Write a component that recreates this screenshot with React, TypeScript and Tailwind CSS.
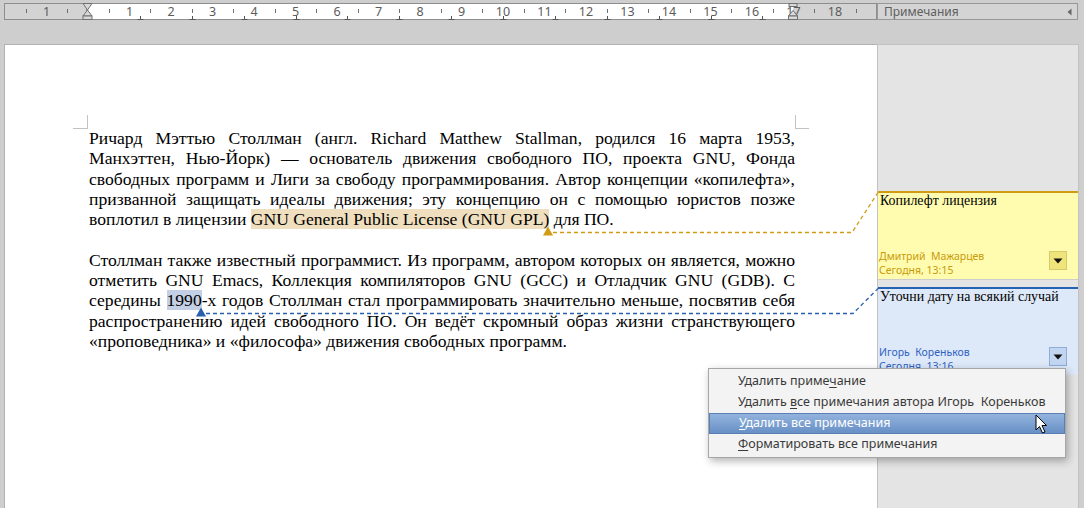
import React from 'react';

const CM = 41.5;
const ZERO = 88;

const Ruler = () => {
  const nums = Array.from({ length: 18 }, (_, i) => i + 1);
  const ticks = Array.from({ length: 21 }, (_, i) => ZERO + CM * (i - 2 + 0.5)).filter((x) => x > 6 && x < 875);
  const tabs = Array.from({ length: 13 }, (_, i) => ZERO + 51.875 * (i + 1));
  return (
    <svg width="877" height="20" className="block shrink-0">
      <rect x="4.5" y="3.5" width="872" height="16" fill="#d3d3d3" stroke="#8e8e8e" />
      <rect x="86" y="4" width="707" height="15" fill="#ffffff" />
      <line x1="86.5" y1="4" x2="86.5" y2="19" stroke="#9a9a9a" />
      {ticks.map((x) => (
        <line key={x} x1={Math.round(x) + 0.5} y1="9" x2={Math.round(x) + 0.5} y2="13" stroke="#6e6e6e" />
      ))}
      {tabs.map((x) => (
        <g key={x} stroke="#555" fill="none">
          <line x1={Math.round(x) + 0.5} y1="16" x2={Math.round(x) + 0.5} y2="19.5" />
          <line x1={Math.round(x) - 2.5} y1="19.5" x2={Math.round(x) + 3.5} y2="19.5" />
        </g>
      ))}
      <text x="46.5" y="16" fontSize="12.5" fill="#5c5c5c" textAnchor="middle" fontFamily="Noto Sans, sans-serif">1</text>
      {nums.map((n) => (
        <text key={n} x={ZERO + CM * n} y="16" fontSize="12.5" fill="#5c5c5c" textAnchor="middle" fontFamily="Noto Sans, sans-serif">
          {n}
        </text>
      ))}
      {/* left indent marker */}
      <g fill="#d9d9d9" stroke="#707070" strokeWidth="1">
        <path d="M83 3.5 L92 3.5 L87.5 10 Z" />
        <path d="M87.5 10 L92 16 L83 16 Z" />
        <rect x="83" y="16" width="9" height="3.5" />
      </g>
      {/* right indent marker */}
      <g fill="#d9d9d9" stroke="#707070" strokeWidth="1">
        <rect x="789" y="3.5" width="8" height="3" />
        <path d="M793 10.5 L797.5 16 L788.5 16 Z" />
        <rect x="788.5" y="16" width="9" height="3.5" />
      </g>
    </svg>
  );
};

const Highlight = ({ color, children }: { color: string; children: React.ReactNode }) => (
  <span style={{ backgroundColor: color }}>{children}</span>
);

const Line = ({ children, last }: { children: React.ReactNode; last?: boolean }) => (
  <span className={last ? 'block text-left whitespace-nowrap' : 'block whitespace-nowrap text-justify [text-align-last:justify]'}>{children}</span>
);

const DropButton = ({ tone }: { tone: 'yellow' | 'blue' }) => (
  <div
    className={
      tone === 'yellow'
        ? 'mt-[2px] mr-[11px] w-[18px] h-[19px] bg-[#efe47c] border border-[#d6cb6a] flex items-center justify-center'
        : 'mt-[2px] mr-[11px] w-[18px] h-[19px] bg-[#c3d6f1] border border-[#8eadd9] flex items-center justify-center'
    }
  >
    <svg width="10" height="6" viewBox="0 0 10 6">
      <path d="M0.5 0.5 L9.5 0.5 L5 5.5 Z" fill="#111" />
    </svg>
  </div>
);

const Comment = ({
  tone,
  text,
  author,
  date,
}: {
  tone: 'yellow' | 'blue';
  text: string;
  author: string;
  date: string;
}) => (
  <div
    className={
      tone === 'yellow'
        ? 'h-[88px] bg-[#fffcb0] border-t-2 border-[#cf9b12] flex flex-col justify-between'
        : 'h-[88px] bg-[#dde9f9] border-t-2 border-[#2562b3] flex flex-col justify-between'
    }
  >
    <div className="pl-[2px] text-[13.9px] leading-[15px] text-black font-['Liberation_Serif',serif]">{text}</div>
    <div className="flex justify-between items-start pb-[2px]">
      <div
        className={
          tone === 'yellow'
            ? "pl-[1px] text-[10.5px] leading-[14px] text-[#c99a08] font-['Noto_Sans',sans-serif] whitespace-pre"
            : "pl-[1px] text-[10.5px] leading-[14px] text-[#2f62c0] font-['Noto_Sans',sans-serif] whitespace-pre"
        }
      >
        <div>{author}</div>
        <div>{date}</div>
      </div>
      <DropButton tone={tone} />
    </div>
  </div>
);

const menuItems = [
  { pre: 'Удалить приме', key: 'ч', post: 'ание', active: false },
  { pre: 'Удалить ', key: 'в', post: 'се примечания автора Игорь  Кореньков', active: false },
  { pre: '', key: 'У', post: 'далить все примечания', active: true },
  { pre: '', key: 'Ф', post: 'орматировать все примечания', active: false },
];

const ContextMenu = () => (
  <div className="absolute left-[708px] top-[368px] w-[358px] bg-[#f3f3f3] border border-[#a6a6a6] shadow-[2px_3px_8px_rgba(0,0,0,0.3)] py-[2px] font-['Noto_Sans',sans-serif] text-[12.5px]">
    {menuItems.map((it) => (
      <div
        key={it.post}
        className={
          it.active
            ? 'h-[21px] pl-[29px] flex items-center whitespace-pre text-white bg-gradient-to-b from-[#93b3dd] to-[#6890c6] border border-[#5a7fb6]'
            : 'h-[21px] pl-[29px] flex items-center whitespace-pre text-[#3a3a3a]'
        }
      >
        <span>
          {it.pre}
          <span className="underline underline-offset-2">{it.key}</span>
          {it.post}
        </span>
      </div>
    ))}
  </div>
);

const Connectors = () => (
  <svg width="1084" height="508" className="absolute left-0 top-0 pointer-events-none">
    <path d="M553 232.5 L852 232.5 L878 192.5" fill="none" stroke="#d19c14" strokeWidth="1.3" strokeDasharray="4 3" />
    <path d="M543 235.5 L553 235.5 L548 226.5 Z" fill="#d19c14" />
    <path d="M206 313.5 L853 313.5 L878 288.5" fill="none" stroke="#2a5fae" strokeWidth="1.3" strokeDasharray="4 3" />
    <path d="M196 316.5 L206 316.5 L201 307.5 Z" fill="#2a5fae" />
  </svg>
);

const Cursor = () => (
  <svg width="14" height="21" viewBox="0 0 14 21" className="absolute left-[1035px] top-[414px] pointer-events-none">
    <path d="M1 1 L1 16 L4.5 12.5 L7.5 19 L10 18 L7 11.5 L11.5 11.5 Z" fill="#ffffff" stroke="#000" strokeWidth="1" strokeLinejoin="round" />
  </svg>
);

export default function App() {
  return (
    <div className="relative w-[1084px] h-[508px] overflow-hidden bg-[#cecece]">
      <div className="flex h-[20px]">
        <Ruler />
        <div className="mt-[3px] h-[17px] w-[201px] border border-[#989898] bg-[#d4d4d4] flex items-center justify-between pl-[6px] pr-[5px]">
          <span className="text-[12px] leading-none text-[#5e5e5e] font-['Noto_Sans',sans-serif]">Примечания</span>
          <svg width="5" height="8" viewBox="0 0 5 8">
            <path d="M4.5 0.5 L4.5 7.5 L0.5 4 Z" fill="#666" />
          </svg>
        </div>
      </div>

      <div className="flex mt-[24px] h-[464px]">
        <div className="ml-[4px] w-[873px] bg-white border-l border-t border-[#b2b2b2]">
          <div className="relative mt-[83px] ml-[84px] w-[706px] text-[17.6px] leading-[20.3px] text-black font-['Liberation_Serif',serif]">
            <span className="absolute left-[-16px] top-[-13px] w-[15px] h-[14px] border-r border-b border-[#c2c2c2]" />
            <span className="absolute left-[706px] top-[-13px] w-[14px] h-[14px] border-l border-b border-[#c2c2c2]" />
            <p>
              <Line>Ричард Мэттью Столлман (англ. Richard Matthew Stallman, родился 16 марта 1953,</Line>
              <Line>Манхэттен, Нью-Йорк) — основатель движения свободного ПО, проекта GNU, Фонда</Line>
              <Line>свободных программ и Лиги за свободу программирования. Автор концепции «копилефта»,</Line>
              <Line>призванной защищать идеалы движения; эту концепцию он с помощью юристов позже</Line>
              <Line last>
                воплотил в лицензии <Highlight color="#efdfbe">GNU General Public License (GNU GPL)</Highlight> для ПО.
              </Line>
            </p>
            <p className="mt-[20.3px]">
              <Line>Столлман также известный программист. Из программ, автором которых он является, можно</Line>
              <Line>отметить GNU Emacs, Коллекция компиляторов GNU (GCC) и Отладчик GNU (GDB). С</Line>
              <Line>
                середины <Highlight color="#c2cfe4">1990</Highlight>-х годов Столлман стал программировать значительно меньше, посвятив себя
              </Line>
              <Line>распространению идей свободного ПО. Он ведёт скромный образ жизни странствующего</Line>
              <Line last>«проповедника» и «философа» движения свободных программ.</Line>
            </p>
          </div>
        </div>

        <div className="w-[202px] bg-[#e4e4e4] border-l border-r border-t border-[#c2c2c2] pt-[146px]">
          <Comment tone="yellow" text="Копилефт лицензия" author="Дмитрий  Мажарцев" date="Сегодня, 13:15" />
          <div className="h-[1px] bg-[#cdcdcd]" />
          <div className="h-[7px]" />
          <Comment tone="blue" text="Уточни дату на всякий случай" author="Игорь  Кореньков" date="Сегодня, 13:16" />
        </div>
      </div>

      <Connectors />
      <ContextMenu />
      <Cursor />
    </div>
  );
}
